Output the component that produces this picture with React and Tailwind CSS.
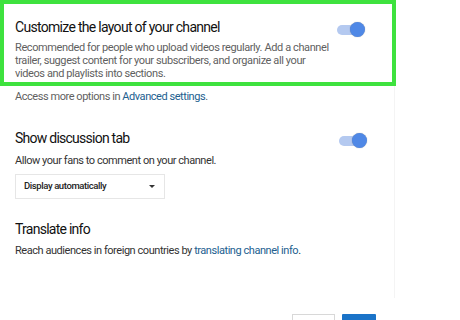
import React from "react";

function Toggle() {
  return (
    <div className="relative w-[28px] h-[16px] flex items-center">
      <div className="w-[24px] h-[10px] rounded-full bg-[#b4c9f0]" />
      <div className="absolute right-0 top-0 w-[15px] h-[15px] rounded-full bg-[#4f88e6] shadow-[0_0_1px_rgba(0,0,0,0.4)]" />
    </div>
  );
}

export default function App() {
  return (
    <div
      className="w-[460px] h-[320px] bg-white overflow-hidden relative text-[#212121]"
      style={{ fontFamily: "Roboto, 'Noto Sans', sans-serif" }}
    >
      <div className="w-[396px] h-[86px] border-4 border-[#3ee23e] pl-[11px] pr-[27px] pt-[14px] flex justify-between">
        <div className="flex flex-col">
          <div className="text-[14px] leading-[18px] tracking-[-0.7px] text-[#111]">Customize the layout of your channel</div>
          <div className="mt-[5px] text-[11px] leading-[13px] tracking-[-0.4px] text-[#5f5f5f] w-[318px]">
            Recommended for people who upload videos regularly. Add a channel trailer, suggest content for your subscribers, and organize all your videos and playlists into sections.
          </div>
        </div>
        <div className="pt-[4px]">
          <Toggle />
        </div>
      </div>
      <div className="w-[395px] border-r border-[#f4f4f4] h-[212px] pl-[15px] pr-[27px]">
        <div className="pt-[4px] text-[11px] leading-[14px] tracking-[-0.45px] text-[#5f5f5f]">
          Access more options in <span className="text-[#22608f]">Advanced settings</span>.
        </div>
        <div className="mt-[25px] flex justify-between items-start">
          <div className="text-[14px] leading-[18px] tracking-[-0.75px] text-[#111]">Show discussion tab</div>
          <div className="pt-[4px]">
            <Toggle />
          </div>
        </div>
        <div className="mt-[5px] text-[11px] leading-[14px] tracking-[-0.45px] text-[#333]">Allow your fans to comment on your channel.</div>
        <div className="mt-[6px] w-[150px] h-[25px] border border-[#e6e6e6] flex items-center justify-between pl-[8px] pr-[9px]">
          <span className="text-[9.5px] font-medium tracking-[-0.4px] text-[#222]">Display automatically</span>
          <span className="w-0 h-0 border-l-[3px] border-r-[3px] border-t-[3px] border-l-transparent border-r-transparent border-t-[#333]" />
        </div>
        <div className="mt-[21px] text-[14px] leading-[18px] tracking-[-0.75px] text-[#111]">Translate info</div>
        <div className="mt-[6px] text-[11px] leading-[14px] tracking-[-0.45px] text-[#333]">
          Reach audiences in foreign countries by <span className="text-[#22608f]">translating channel info</span>.
        </div>
      </div>
      <div className="flex gap-[7px] pl-[292px] mt-[16px]">
        <div className="w-[43px] h-[20px] border border-[#d8d8d8] bg-white" />
        <div className="w-[34px] h-[20px] bg-[#1a73c8] rounded-[1px]" />
      </div>
    </div>
  );
}
